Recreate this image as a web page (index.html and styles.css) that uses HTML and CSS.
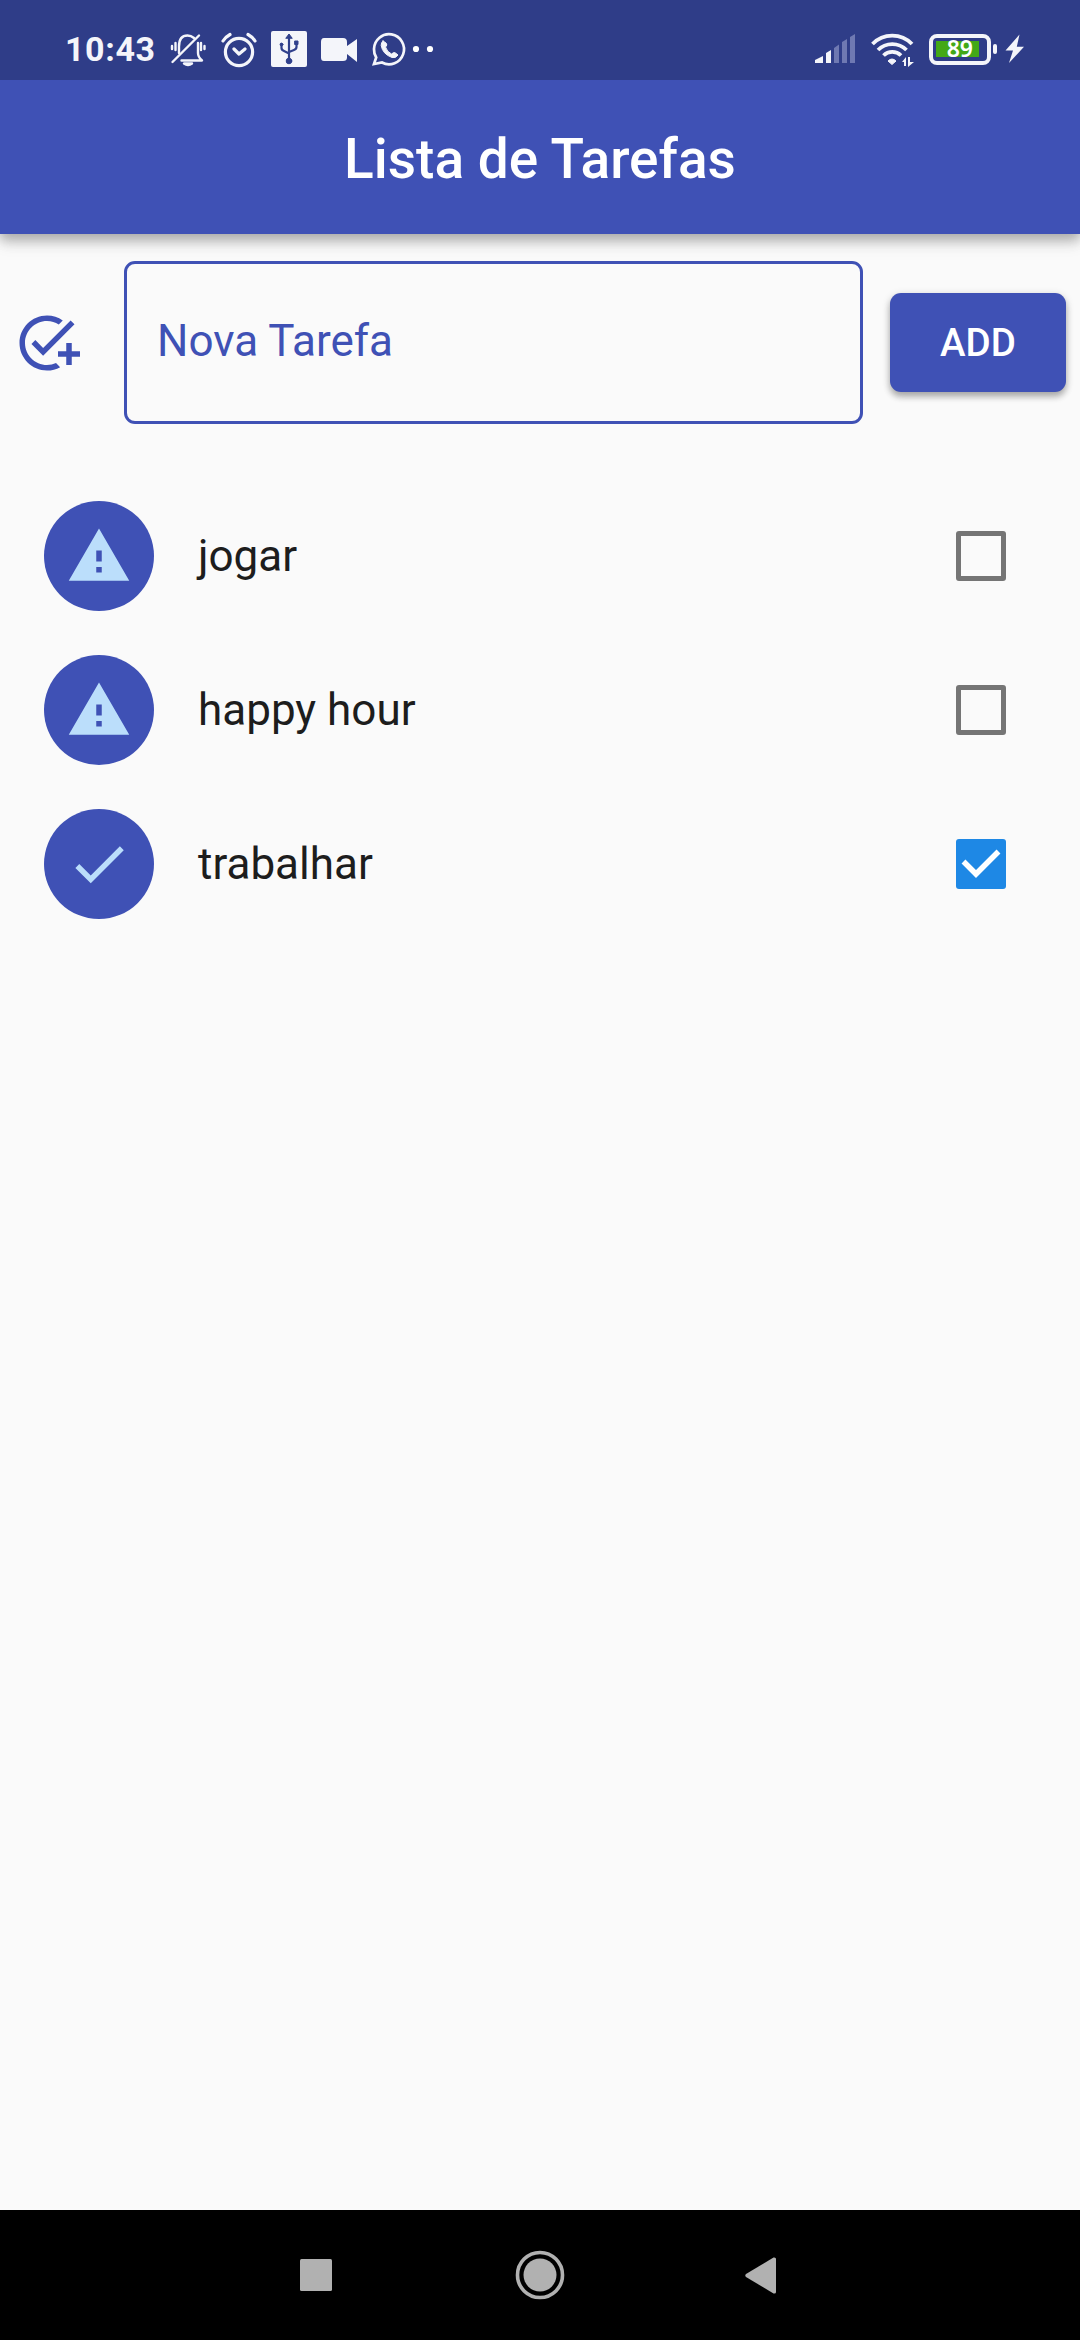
FILE: index.html
```html
<!DOCTYPE html>
<html lang="pt-BR">
<head>
<meta charset="utf-8">
<title>Lista de Tarefas</title>
<link rel="stylesheet" href="styles.css">
</head>
<body>
<div class="screen">
  <div class="status-bar">
    <span class="clock">10:43</span>
    <svg class="status-left" width="275" height="80" viewBox="165 0 275 80" fill="none" stroke="#f4f5fa" stroke-linecap="round" stroke-linejoin="round">
      <g stroke-width="2.4">
        <path d="M179 53V46.5Q179 35.500 187.500 35.500Q191 35.500 194 38M198 43V53Q198 57 202 60.500H181.500" />
        <path d="M172.500 62L199 35.500M175.500 43V50M172 46V49M201 43V50M204.500 46V49" />
        <path d="M184 63.500H192Q188 66.500 184 63.500Z" fill="#f4f5fa" />
      </g>
      <g stroke-width="3.200">
        <circle cx="239" cy="52" r="13.600" />
        <path d="M234 49L239 54L245 49M223 41Q225.500 37 230 34.500M248 34.500Q252.500 37 255 41" />
      </g>
      <rect x="271" y="31" width="36" height="36" rx="2" fill="#f4f5fa" stroke="none" />
      <g stroke="#30408c" stroke-width="2.2">
        <path d="M289 60V37M281.500 44V48Q281.500 50 284 51L289 53.500M296.500 43V47Q296.500 49 294 50L289 52" />
        <path d="M286 38L289 34L292 38Z" fill="#30408c" stroke-width="1" />
        <circle cx="289" cy="61" r="2.800" fill="#30408c" stroke-width="1" />
        <circle cx="281.500" cy="44.500" r="1.400" fill="#30408c" stroke-width="1" />
        <path d="M295 41H298V44.500H295Z" fill="#30408c" stroke-width="1" />
      </g>
      <path d="M324 38H343Q347 38 347 42V46L357 39V62L347 54V57.500Q347 61 343 61H324Q321 61 321 57.500V42Q321 38 324 38Z" fill="#f4f5fa" stroke="none" />
      <path d="M374 64L376.200 57.500Q373.800 53.500 374 49A15 15 0 1 1 382 62.500Z" stroke-width="2.700" stroke-linejoin="miter" />
      <path d="M383 41L386 43Q388 45 385.500 47Q387 52 391.500 54Q394 51.500 395.500 53L398 55Q396 58.500 392 57.500Q382.500 54 381.200 45.500Q381 42.500 383 41Z" fill="#f4f5fa" stroke-width="1" />
      <circle cx="416" cy="49" r="3.100" fill="#fff" stroke="none" />
      <circle cx="430" cy="49" r="3.100" fill="#fff" stroke="none" />
    </svg>
    <svg class="status-signal" width="110" height="80" viewBox="810 0 110 80" fill="#f4f5fa">
      <path d="M815 63V60L823 56V63Z M826 63V53L831 50V63Z" />
      <path d="M834 63V48L839 44.500V63Z M842 63V42L847 39V63Z M850 63V37L855 34V63Z" fill="#6f79b2" />
      <g fill="none" stroke="#f4f5fa" stroke-width="3.800">
        <path d="M872.500 44A27.500 27.500 0 0 1 912 44M878 50A20 20 0 0 1 906.500 50M883.500 55.500A12.500 12.500 0 0 1 901 55.500" />
      </g>
      <path d="M888 61Q892 57 896 61L892 64.500Z" stroke="#f4f5fa" />
      <path d="M902 62L906 57V66H904V62Z M908 57H910V62H914L908 67Z" />
    </svg>
    <div class="battery">
      <div class="battery-level">89</div>
      <span class="battery-tip"></span>
    </div>
    <svg class="bolt" width="20" height="30" viewBox="0 0 20 30" fill="#f4f5fa"><path d="M14.500 .5L.5 16.500H8L4 29L19 12.800H11.800Z" /></svg>
  </div>

  <header class="app-bar"><h1 class="app-title">Lista de Tarefas</h1></header>

  <main class="content">
    <form class="new-task">
      <svg class="icon add-icon" viewBox="0 0 24 24"><path d="M22 5.180L10.590 16.600L6.350 12.360L7.760 10.950L10.590 13.780L20.590 3.780ZM12 20C7.590 20 4 16.410 4 12S7.590 4 12 4C13.570 4 15.040 4.460 16.280 5.250L17.730 3.800C16.100 2.670 14.130 2 12 2C6.480 2 2 6.480 2 12S6.480 22 12 22C13.730 22 15.360 21.560 16.780 20.780L15.280 19.280C14.280 19.740 13.170 20 12 20ZM19 15H16V17H19V20H21V17H24V15H21V12H19Z" /></svg>
      <div class="task-field"><span class="field-label">Nova Tarefa</span></div>
      <button class="add-button" type="button">ADD</button>
    </form>

    <ul class="task-list">
      <li class="task">
        <span class="avatar"><svg class="icon" viewBox="0 0 24 24"><path d="M1 21H23L12 2ZM13 18H11V16H13ZM13 14H11V10H13Z" /></svg></span>
        <span class="task-name">jogar</span>
        <span class="checkbox"></span>
      </li>
      <li class="task">
        <span class="avatar"><svg class="icon" viewBox="0 0 24 24"><path d="M1 21H23L12 2ZM13 18H11V16H13ZM13 14H11V10H13Z" /></svg></span>
        <span class="task-name">happy hour</span>
        <span class="checkbox"></span>
      </li>
      <li class="task">
        <span class="avatar"><svg class="icon" viewBox="0 0 24 24"><path d="M9 16.170L4.830 12L3.410 13.410L9 19L21 7L19.590 5.590Z" /></svg></span>
        <span class="task-name">trabalhar</span>
        <span class="checkbox checked"><svg width="50" height="50" viewBox="0 0 50 50"><path d="M7.500 22.500L20 35L42.500 12.500" fill="none" stroke="#fff" stroke-width="5.500" /></svg></span>
      </li>
    </ul>
  </main>

  <nav class="nav-bar">
    <svg width="32" height="32" viewBox="0 0 32 32"><rect width="32" height="32" rx="1.500" /></svg>
    <svg width="50" height="50" viewBox="0 0 50 50"><circle cx="25" cy="25" r="22.500" fill="none" stroke="#b1b1b1" stroke-width="3.600" /><circle cx="25" cy="25" r="16.500" /></svg>
    <svg width="32" height="37" viewBox="0 0 32 37"><path d="M1 17Q-.5 18.500 1 20L28.500 36.500Q31 37 31 35V2Q31 0 28.500 .5Z" /></svg>
  </nav>
</div>
</body>
</html>
```

FILE: styles.css
```css
* { box-sizing: border-box; }
body { margin: 0; font-family: Roboto, "Liberation Sans", sans-serif; background: #fafafa; }
svg { display: block; flex: none; }

.screen { display: flex; flex-direction: column; width: 1080px; height: 2340px; overflow: hidden; }

.status-bar { display: flex; align-items: center; height: 80px; padding-left: 65px; background: #2f3d88; color: #f4f5fa; }
.clock { width: 100px; font-size: 34px; font-weight: 700; line-height: 62px; letter-spacing: .6px; padding-top: 18px; white-space: nowrap; }
.status-signal { margin-left: 370px; }
.battery { display: flex; position: relative; align-items: center; width: 62px; height: 31px; margin: 18px 0 0 9px; padding: 3px; border: 4px solid #f4f5fa; border-radius: 8px; }
.battery-level { width: 43px; height: 16px; background: #43a817; color: #fff; font-family: "Noto Sans", sans-serif; font-size: 23px; font-weight: 600; line-height: 15px; text-align: right; padding-right: 6px; }
.battery-tip { position: absolute; right: -10px; top: 6px; width: 4px; height: 10px; border-radius: 2px; background: #f4f5fa; }
.bolt { margin: 18px 0 0 14px; }

.app-bar { position: relative; display: flex; align-items: center; justify-content: center; height: 154px; background: #3f51b5; box-shadow: 0 5px 11px rgba(0, 0, 0, .22), 0 10px 14px rgba(0, 0, 0, .1), 0 2px 20px rgba(0, 0, 0, .08); clip-path: inset(0 0 -40px 0); }
.app-title { margin: 0; padding-top: 3px; color: #fff; font-size: 55px; font-weight: 500; line-height: 64px; }

.content { flex: 1; padding-top: 27px; }
.new-task { display: flex; align-items: center; height: 163px; padding: 0 14px; }
.icon { width: 66px; height: 66px; fill: currentColor; }
.add-icon { color: #3f51b5; }
.task-field { display: flex; align-items: center; width: 739px; height: 163px; margin: 0 27px 0 44px; padding-left: 30px; border: 3px solid #3f51b5; border-radius: 11px; }
.field-label { color: #3f51b5; font-size: 44px; line-height: 52px; padding-bottom: 4px; }
.add-button { width: 176px; height: 99px; padding: 0; border: 0; border-radius: 11px; background: #3f51b5; color: #fff; font: 500 38.500px Roboto, sans-serif; box-shadow: 0 5px 6px rgba(0, 0, 0, .24), 0 2px 8px rgba(0, 0, 0, .16); }

.task-list { margin: 0; padding: 55px 0 0; list-style: none; }
.task { display: flex; align-items: center; height: 154px; padding: 0 74px 0 44px; }
.avatar { display: flex; align-items: center; justify-content: center; width: 110px; height: 110px; border-radius: 50%; background: #3f51b5; color: #bbdefb; }
.task-name { flex: 1; margin-left: 44px; color: #1d1d1d; font-size: 44px; line-height: 52px; }
.checkbox { width: 50px; height: 50px; border: 5.500px solid #757575; border-radius: 3px; }
.checked { border: 0; background: #1e88e5; }

.nav-bar { display: flex; align-items: center; height: 130px; padding-left: 300px; background: #000; fill: #b1b1b1; }
.nav-bar svg + svg { margin-left: 183px; }
.nav-bar svg:last-child { margin-left: 180px; }
```
